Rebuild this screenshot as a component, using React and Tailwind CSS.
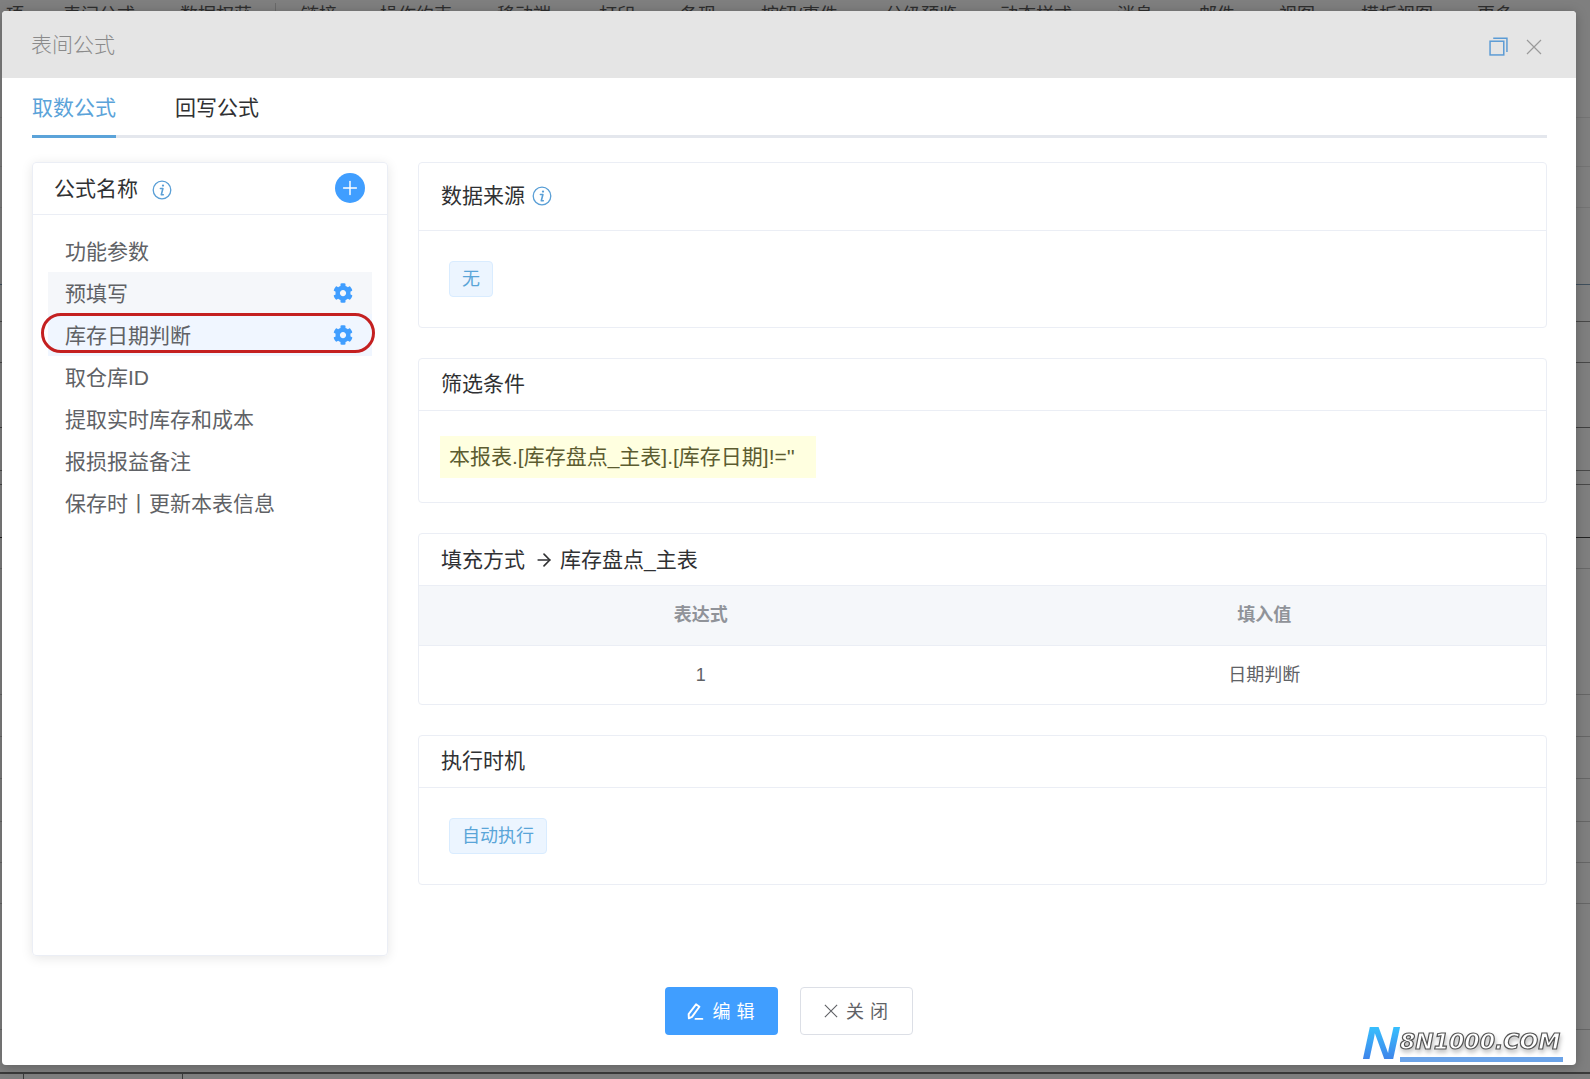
import { Plus, ArrowRight } from 'lucide-react';
import { FaCog } from 'react-icons/fa';

const font = 'font-["Liberation_Sans","Noto_Sans_CJK_SC",sans-serif]';

const topTabs = [
  { label: '项', cls: 'w-[63px] pl-[6px]' },
  { label: '表间公式', cls: 'w-[117px]' },
  { label: '数据权获', cls: 'w-[95px]' },
  { label: '链接', cls: 'w-[105px] pl-[25px] border-l border-[#6a6a6a]' },
  { label: '操作约束', cls: 'w-[117px]' },
  { label: '移动端', cls: 'w-[102px]' },
  { label: '打印', cls: 'w-[81px]' },
  { label: '备现', cls: 'w-[81px]' },
  { label: '按钮/事件', cls: 'w-[124px]' },
  { label: '分级预览', cls: 'w-[115px]' },
  { label: '动态样式', cls: 'w-[117px]' },
  { label: '消息', cls: 'w-[82px]' },
  { label: '邮件', cls: 'w-[80px]' },
  { label: '视图', cls: 'w-[82px]' },
  { label: '模板视图', cls: 'w-[116px]' },
  { label: '更多', cls: 'w-[80px]' },
];

// rows of the sheet behind the dialog, only seen in the strips on the left and right
const sheetRows = [
  'h-[88px] border-[#747474]',
  'h-[49px] border-[#747474]',
  'h-[41px] border-[#747474]',
  'h-[77px] border-[#3f4f5c]',
  'h-[37px] border-[#484848]',
  'h-[41px] border-[#484848]',
  'h-[65px] border-[#404040]',
  'h-[43px] border-[#484848]',
  'h-[14px] border-[#484848]',
  'h-[53px] border-[#222222]',
  'h-[31px] border-[#686868]',
  'h-[126px] border-[#666666]',
  'h-[42px] border-[#666666]',
  'h-[42px] border-[#666666]',
  'h-[43px] border-[#666666]',
  'h-[41px] border-[#666666]',
  'h-[41px] border-[#666666]',
  'h-[126px] border-[#666666]',
  'h-[43px] border-[#3a3a3a]',
];

const formulas = ['功能参数', '预填写', '库存日期判断', '取仓库ID', '提取实时库存和成本', '报损报益备注', '保存时丨更新本表信息'];

const InfoIcon = ({ className }) => (
  <svg viewBox="0 0 20 20" className={className} fill="none">
    <circle cx="10" cy="10" r="8.8" stroke="#5a9fd6" strokeWidth="1.3" />
    <circle cx="11" cy="5.6" r="1.15" fill="#5a9fd6" />
    <path d="M8.4 8.5h2.5l-1.6 6.2h2" stroke="#5a9fd6" strokeWidth="1.6" strokeLinecap="round" strokeLinejoin="round" />
  </svg>
);

const CloseIcon = ({ className, width = 1.2 }) => (
  <svg viewBox="0 0 16 16" className={className} fill="none" stroke="currentColor" strokeWidth={width}>
    <path d="M1 1l14 14M15 1 1 15" />
  </svg>
);

const Card = ({ className, children }) => (
  <div className={`border border-[#ebeef5] rounded-[4px] bg-white ${className}`}>{children}</div>
);

const App = () => {
  return (
    <div className={`relative w-[1590px] h-[1079px] overflow-hidden bg-[#7f7f7f] ${font}`}>
      {/* page behind the dialog */}
      <div className="flex h-[30px] text-[18px] leading-[24px] text-[#2e2e2e] pt-[3px]">
        {topTabs.map(t => (
          <div key={t.label} className={`shrink-0 whitespace-nowrap ${t.cls}`}>{t.label}</div>
        ))}
      </div>
      {sheetRows.map((r, i) => (
        <div key={i} className={`border-b ${r}`} />
      ))}
      <div className="flex h-[20px] border-t border-[#3a3a3a]">
        <div className="w-[24px] border-r border-[#3a3a3a]" />
        <div className="w-[159px] border-r border-[#3a3a3a]" />
      </div>

      {/* dialog */}
      <div className="absolute left-[2px] top-[11px] w-[1574px] h-[1054px] bg-white rounded-[4px] overflow-hidden flex flex-col shadow-[0_2px_12px_rgba(0,0,0,0.25)]">
        <div className="h-[67px] shrink-0 bg-[#e5e5e5] flex items-center justify-between pl-[29px] pr-[34px]">
          <span className="text-[21px] text-[#8a8a8a] font-light">表间公式</span>
          <div className="flex items-center gap-[18px] pt-[4px]">
            <svg viewBox="0 0 18 18" className="w-[19px] h-[19px]" fill="none" stroke="#5b9bd5" strokeWidth="1.4">
              <rect x="1" y="4" width="13" height="13" />
              <path d="M4 1.2h13v13" />
            </svg>
            <CloseIcon className="w-[16px] h-[16px] text-[#9a9a9a]" />
          </div>
        </div>

        <div className="ml-[30px] mr-[29px] h-[60px] shrink-0 flex gap-[59px] border-b-[3px] border-[#e4e7ed] text-[21px]">
          <div className="h-[60px] pt-[14px] border-b-[3px] border-[#5ba3d9] text-[#5ba3d9]">取数公式</div>
          <div className="h-[60px] pt-[14px] text-[#303133]">回写公式</div>
        </div>

        <div className="flex gap-[30px] pl-[30px] pr-[29px] pt-[24px]">
          {/* formula list */}
          <div className="w-[356px] h-[794px] shrink-0 rounded-[4px] border border-[#ebeef5] shadow-[0_2px_12px_rgba(0,0,0,0.1)]">
            <div className="h-[52px] flex items-center justify-between border-b border-[#ebeef5] pl-[21px] pr-[22px] pb-[2px]">
              <div className="flex items-center gap-[14px]">
                <span className="text-[21px] text-[#303133] pt-[2px]">公式名称</span>
                <InfoIcon className="w-[20px] h-[20px] mt-[4px]" />
              </div>
              <div className="w-[30px] h-[30px] rounded-full bg-[#409eff] flex items-center justify-center">
                <Plus className="w-[22px] h-[22px] text-white" strokeWidth={1.6} />
              </div>
            </div>
            <div className="pt-[15px] px-[15px]">
              {formulas.map((f, i) => (
                <div
                  key={f}
                  className={`relative h-[42px] flex items-center justify-between pl-[17px] pr-[19px] text-[21px] text-[#606266] whitespace-nowrap ${i === 1 ? 'bg-[#f5f7fa]' : ''} ${i === 2 ? 'bg-[#f0f6ff]' : ''}`}
                >
                  <span className="pt-[2px]">{f}</span>
                  {(i === 1 || i === 2) && <FaCog className="w-[20px] h-[20px] text-[#409eff]" />}
                  {i === 2 && <div className="absolute -left-[7px] -right-[3px] -top-[1px] h-[40px] rounded-full border-[3px] border-[#c42020]" />}
                </div>
              ))}
            </div>
          </div>

          {/* detail cards */}
          <div className="flex-1 flex flex-col gap-[30px]">
            <Card className="h-[166px]">
              <div className="h-[68px] flex items-center gap-[7px] border-b border-[#ebeef5] pl-[22px] pb-[2px] text-[21px] text-[#303133]">
                数据来源
                <InfoIcon className="w-[20px] h-[20px] mt-[1px]" />
              </div>
              <div className="pt-[30px] pl-[30px]">
                <span className="inline-flex items-center justify-center w-[44px] h-[36px] rounded-[4px] bg-[#ecf5ff] border border-[#d9ecff] text-[18px] text-[#5aa5d8]">无</span>
              </div>
            </Card>

            <Card className="h-[145px]">
              <div className="h-[52px] flex items-center border-b border-[#ebeef5] pl-[22px] pb-[2px] text-[21px] text-[#303133]">筛选条件</div>
              <div className="pt-[25px] pl-[21px]">
                <div className="inline-flex items-center w-[376px] h-[42px] pl-[9px] bg-[#ffffe0] text-[21px] text-[#5c5c30] whitespace-nowrap">本报表.[库存盘点_主表].[库存日期]!=''</div>
              </div>
            </Card>

            <Card className="h-[172px]">
              <div className="h-[52px] flex items-center border-b border-[#ebeef5] pl-[22px] text-[21px] text-[#303133]">
                填充方式
                <ArrowRight className="w-[20px] h-[20px] ml-[9px] mr-[6px]" strokeWidth={2} />
                库存盘点_主表
              </div>
              <div className="grid grid-cols-2 h-[60px] items-center bg-[#f5f7fa] border-b border-[#ebeef5] text-[18px] font-bold text-[#909399] text-center">
                <div>表达式</div>
                <div>填入值</div>
              </div>
              <div className="grid grid-cols-2 h-[58px] items-center text-[18px] text-[#606266] text-center">
                <div>1</div>
                <div>日期判断</div>
              </div>
            </Card>

            <Card className="h-[150px]">
              <div className="h-[52px] flex items-center border-b border-[#ebeef5] pl-[22px] pb-[2px] text-[21px] text-[#303133]">执行时机</div>
              <div className="pt-[30px] pl-[30px]">
                <span className="inline-flex items-center justify-center w-[98px] h-[36px] rounded-[4px] bg-[#ecf5ff] border border-[#d9ecff] text-[18px] text-[#5aa5d8]">自动执行</span>
              </div>
            </Card>
          </div>
        </div>

        {/* footer */}
        <div className="flex justify-center gap-[22px] pt-[31px] pr-[1px]">
          <div className="w-[113px] h-[48px] rounded-[4px] bg-[#409eff] text-white text-[18px] tracking-[6px] flex items-center justify-center gap-[8px] pl-[4px]">
            <svg viewBox="0 0 18 18" className="w-[19px] h-[19px]" fill="none" stroke="white" strokeWidth="1.8" strokeLinejoin="round" strokeLinecap="round">
              <path d="M2.5 11.5 9.5 2.2l3.2 2.3-7 9.6-3 1.3z" />
              <path d="M9 16h6.5" />
            </svg>
            <span className="pt-[2px]">编辑</span>
          </div>
          <div className="w-[113px] h-[48px] rounded-[4px] bg-white border border-[#dcdfe6] text-[#606266] text-[18px] tracking-[6px] flex items-center justify-center gap-[8px] pl-[6px]">
            <CloseIcon className="w-[14px] h-[14px]" width={1.3} />
            <span className="pt-[2px]">关闭</span>
          </div>
        </div>
      </div>

      {/* site watermark */}
      <div className="absolute left-[1362px] top-[1024px] w-[201px] h-[38px] flex items-end">
        <span className="w-[38px] shrink-0 origin-left scale-x-[1.12] font-['Liberation_Sans',sans-serif] font-black italic text-[46px] leading-[38px] h-[38px] bg-gradient-to-b from-[#35c4ff] to-[#3f7fe8] bg-clip-text text-transparent">N</span>
        <div className="flex-1 min-w-0 h-[38px] flex flex-col justify-end">
          <span className="font-['DejaVu_Sans',sans-serif] font-bold italic text-[22px] leading-[26px] whitespace-nowrap text-white [-webkit-text-stroke:1.2px_#555555] [filter:drop-shadow(1px_3px_2px_rgba(0,0,0,0.25))]">8N1000.COM</span>
          <div className="h-[5px] mt-[2px] bg-[#6ba3e8]" />
        </div>
      </div>
    </div>
  );
};

export default App;
